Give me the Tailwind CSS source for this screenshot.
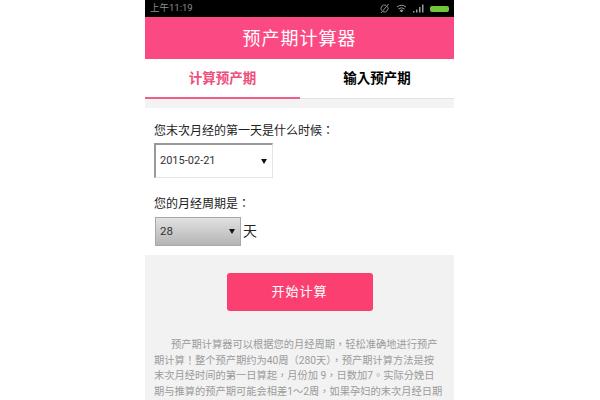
<!DOCTYPE html>
<html lang="zh-Hant">
<head>
  <meta charset="UTF-8" />
  <title>预产期计算器</title>
  <script src="https://cdn.jsdelivr.net/npm/@tailwindcss/browser@4"></script>
</head>
<body class="bg-white h-[400px] overflow-hidden font-['Roboto','Noto_Sans_CJK_TC',sans-serif]">
  <div class="w-[309px] h-[400px] ml-[145px] overflow-hidden flex flex-col">

    <!-- status bar -->
    <div class="h-[17px] shrink-0 bg-black flex items-center justify-between pl-[5px] pr-[5px] text-[9.5px] text-[#8f8f8f]">
      <span>上午11:19</span>
      <div class="flex items-center gap-[6px]">
        <svg width="11" height="11" viewBox="0 0 11 11" fill="none" stroke="#8f8f8f" stroke-width="1"><path d="M2.500 7.500a3.600 3.600 0 0 1 4.500-5.200M8.500 3.500a3.600 3.600 0 0 1-4.500 5.200"/><path d="M2 10 9.500 1"/></svg>
        <svg width="11" height="9" viewBox="0 0 11 9" fill="none" stroke="#a0a0a0" stroke-width="1"><path d="M1 3q4.500-3.500 9 0M2.500 5q3-2.500 6 0"/><path d="M4.200 6.500 5.500 8l1.300-1.500q-1.300-1-2.600 0z" fill="#a0a0a0"/></svg>
        <svg width="11" height="9" viewBox="0 0 11 9" fill="#9a9a9a"><rect x="0" y="7" width="1.500" height="1.500"/><rect x="3" y="5.500" width="1.500" height="3"/><rect x="6" y="3" width="1.500" height="5.500"/><rect x="9" y="0.500" width="1.500" height="8"/></svg>
        <div class="w-[19px] h-[6px] rounded-[2px] bg-[#71c63a]"></div>
      </div>
    </div>

    <!-- header -->
    <div class="h-[42px] shrink-0 bg-[#fb4a83] text-white text-[18px] flex items-center justify-center tracking-[1px]">预产期计算器</div>

    <!-- tabs -->
    <div class="h-[40px] shrink-0 flex text-[13.500px] font-bold border-b border-[#e2e2e2]">
      <div class="w-[155px] h-[40px] flex items-center justify-center text-[#ee4f7d] border-b-2 border-[#ee5f88]">计算预产期</div>
      <div class="flex-1 flex items-center justify-center text-black">输入预产期</div>
    </div>
    <div class="h-[9px] shrink-0 bg-[#f3f3f3]"></div>

    <!-- form -->
    <div class="h-[147px] shrink-0 pl-[9px] pt-[14px] text-[12px] text-[#222]">
      <div class="leading-[18px]">您末次月经的第一天是什么时候：</div>
      <div class="mt-[3px] w-[119px] h-[35px] border border-[#e4e4e4] border-l-2 border-t-2 border-l-[#999] border-t-[#999] flex items-center justify-between pl-[4px] pr-[5px] text-[11px] text-[#333]">
        <span>2015-02-21</span>
        <svg width="6" height="5" viewBox="0 0 6 5" fill="#111"><path d="M0 0h6L3 5z"/></svg>
      </div>
      <div class="mt-[17px] leading-[18px]">您的月经周期是：</div>
      <div class="mt-[4px] flex items-center">
        <div class="ml-[1px] w-[86px] h-[29px] bg-linear-to-b from-[#e2e2e2] to-[#b4b4b4] border border-[#a8a8a8] flex items-center justify-between pl-[4px] pr-[5px] text-[11.500px] text-[#333]">
          <span>28</span>
          <svg width="6" height="5" viewBox="0 0 6 5" fill="#111"><path d="M0 0h6L3 5z"/></svg>
        </div>
        <span class="ml-[2px] text-[14px] text-[#222]">天</span>
      </div>
    </div>

    <!-- bottom -->
    <div class="flex-1 bg-[#f2f2f2] pt-[18px] overflow-hidden">
      <button class="block mx-auto w-[146px] h-[38px] bg-[#fb3f70] rounded-[3px] text-white text-[13px] tracking-[1px]">开始计算</button>
      <p class="mt-[26px] pl-[9px] pr-[5px] text-[10.250px] leading-[15.500px] text-[#9b9b9b] whitespace-nowrap"><span class="inline-block w-[17px]"></span>预产期计算器可以根据您的月经周期，轻松准确地进行预产<br>期计算！整个预产期约为40周（280天），预产期计算方法是按<br>末次月经时间的第一日算起，月份加 9，日数加7。实际分娩日<br>期与推算的预产期可能会相差1～2周，如果孕妇的末次月经日期</p>
    </div>
  </div>
</body>
</html>
